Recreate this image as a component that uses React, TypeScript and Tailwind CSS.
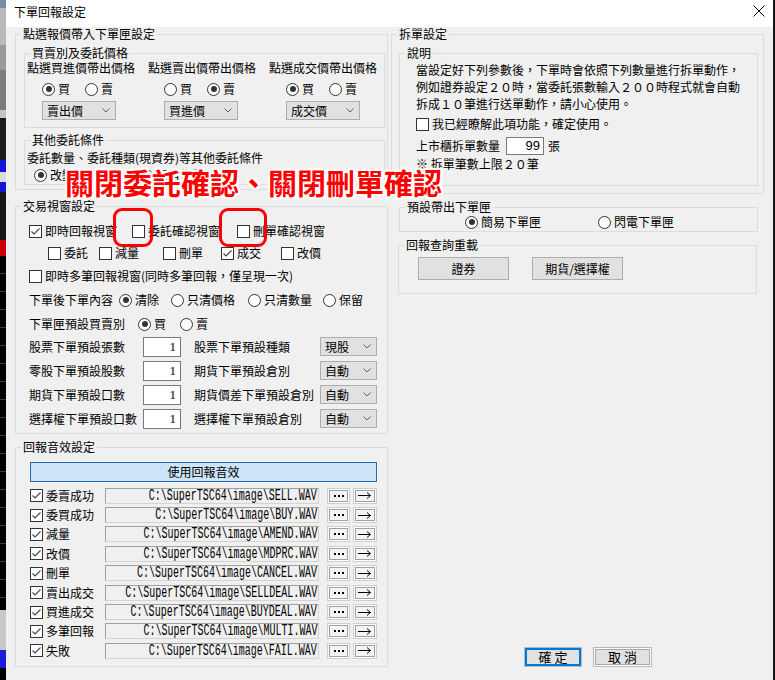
import type { ReactNode } from "react";

type BoxProps = { title: string; className?: string; children: ReactNode };

// Windows-style group box: border broken by the caption
function GroupBox({ title, className = "", children }: BoxProps) {
  return (
    <fieldset className={`min-w-0 border border-[#dcdcdc] ${className}`}>
      <legend className="ml-[5px] px-[2px] leading-[14px]">{title}</legend>
      {children}
    </fieldset>
  );
}

function Check({ checked = false }: { checked?: boolean }) {
  return (
    <span className="flex h-[13px] w-[13px] shrink-0 items-center justify-center border border-[#333] bg-white">
      {checked && (
        <svg width="11" height="11" viewBox="0 0 11 11">
          <polyline points="1.5,5.5 4,8 9.5,2.5" fill="none" stroke="#444" strokeWidth="1.1" />
        </svg>
      )}
    </span>
  );
}

function CheckItem({ checked, label, className = "" }: { checked?: boolean; label: string; className?: string }) {
  return (
    <span className={`flex shrink-0 items-center gap-[3px] whitespace-nowrap ${className}`}>
      <Check checked={checked} />
      <span>{label}</span>
    </span>
  );
}

function Radio({ checked = false }: { checked?: boolean }) {
  return (
    <span className="flex h-[13px] w-[13px] shrink-0 items-center justify-center rounded-full border border-[#333] bg-white">
      {checked && <span className="h-[6px] w-[6px] rounded-full bg-[#333]" />}
    </span>
  );
}

function RadioItem({ checked, label, className = "" }: { checked?: boolean; label: string; className?: string }) {
  return (
    <span className={`flex shrink-0 items-center gap-[3px] whitespace-nowrap ${className}`}>
      <Radio checked={checked} />
      <span>{label}</span>
    </span>
  );
}

function Combo({ value, className = "" }: { value: string; className?: string }) {
  return (
    <div className={`flex h-[19px] items-center justify-between border border-[#adadad] bg-[#e1e1e1] pl-[4px] pr-[5px] ${className}`}>
      <span>{value}</span>
      <svg width="8" height="5" viewBox="0 0 8 5">
        <polyline points="0.5,0.5 4,4 7.5,0.5" fill="none" stroke="#606060" />
      </svg>
    </div>
  );
}

function NumBox({ value, className = "" }: { value: string; className?: string }) {
  return (
    <div className={`flex items-center justify-end border border-[#7a7a7a] bg-white pr-[4px] font-['Liberation_Serif',serif] text-[13px] ${className}`}>
      {value}
    </div>
  );
}

function SmallButton({ children }: { children: ReactNode }) {
  return (
    <span className="flex h-[16px] border border-[#cfcfcf] bg-white p-[1px]">
      <span className="flex flex-1 items-center justify-center border border-[#a0a0a0] bg-[#f4f4f4]">{children}</span>
    </span>
  );
}

function BackdropLeft() {
  return (
    <div className="flex w-[6px] shrink-0 flex-col">
      <div className="h-[8px] bg-[#7d8aa6]" />
      <div className="h-[37px] bg-[#b9b9b9]" />
      <div className="h-[25px] bg-[#9a9a9a]" />
      <div className="h-[40px] bg-[#7c7c7c]" />
      <div className="h-[8px] bg-[#c4c4c4]" />
      <div className="h-[42px] bg-[#1c1c1c]" />
      <div className="h-[12px] bg-[#1414d6]" />
      <div className="h-[10px] bg-[#dcdcdc]" />
      <div className="h-[10px] bg-[#1414d6]" />
      <div className="h-[48px] bg-[#161616]" />
      <div className="h-[16px] bg-[#c80000]" />
      <div className="h-[354px] bg-[repeating-linear-gradient(to_bottom,#000_0,#000_17px,#3c3c3c_17px,#3c3c3c_18px)]" />
      <div className="h-[40px] bg-[#c8c8c8]" />
      <div className="h-[18px] bg-[#1c1cd8]" />
      <div className="flex-1 bg-black" />
    </div>
  );
}

const priceCols = [
  { label: "點選買進價帶出價格", buy: true, value: "賣出價", inset: "ml-[15px]" },
  { label: "點選賣出價帶出價格", buy: false, value: "買進價", inset: "ml-[16px]" },
  { label: "點選成交價帶出價格", buy: true, value: "成交價", inset: "ml-[17px]" },
];

const defaults = [
  { left: "股票下單預設張數", right: "股票下單預設種類", combo: "現股" },
  { left: "零股下單預設股數", right: "期貨下單預設倉別", combo: "自動" },
  { left: "期貨下單預設口數", right: "期貨價差下單預設倉別", combo: "自動" },
  { left: "選擇權下單預設口數", right: "選擇權下單預設倉別", combo: "自動" },
];

const sounds = [
  { label: "委賣成功", file: "SELL" },
  { label: "委買成功", file: "BUY" },
  { label: "減量", file: "AMEND" },
  { label: "改價", file: "MDPRC" },
  { label: "刪單", file: "CANCEL" },
  { label: "賣出成交", file: "SELLDEAL" },
  { label: "買進成交", file: "BUYDEAL" },
  { label: "多筆回報", file: "MULTI" },
  { label: "失敗", file: "FAIL" },
];

function LeftColumn() {
  return (
    <div className="flex w-[373px] shrink-0 flex-col">
      <GroupBox title="點選報價帶入下單匣設定" className="pb-[4px]">
        <GroupBox title="買賣別及委託價格" className="ml-[8px] mr-[2px] mt-[5px] pb-[7px]">
          <div className="grid grid-cols-[121px_121px_1fr] pl-[2px] pt-[1px]">
            {priceCols.map((c) => (
              <div key={c.label}>
                <div className="whitespace-nowrap">{c.label}</div>
                <div className={`mt-[6px] flex h-[16px] items-center ${c.inset}`}>
                  <RadioItem checked={c.buy} label="買" className="w-[43px]" />
                  <RadioItem checked={!c.buy} label="賣" />
                </div>
                <Combo value={c.value} className={`mt-[4px] w-[74px] ${c.inset}`} />
              </div>
            ))}
          </div>
        </GroupBox>
        <GroupBox title="其他委託條件" className="ml-[8px] mr-[2px] mt-[5px] pb-[1px]">
          <div className="pl-[2px] pt-[4px]">
            <div>委託數量、委託種類(現資券)等其他委託條件</div>
            <div className="mt-[2px] flex h-[16px] items-center pl-[7px]">
              <RadioItem checked label="改變並不設定" className="w-[106px]" />
              <RadioItem label="保留作業" />
            </div>
          </div>
        </GroupBox>
      </GroupBox>

      <GroupBox title="交易視窗設定" className="mt-[9px] pb-[4px]">
        <div className="pl-[13px] pt-[10px]">
          <div className="flex h-[16px] items-center">
            <CheckItem checked label="即時回報視窗" className="w-[103px]" />
            <CheckItem label="委託確認視窗" className="w-[105px]" />
            <CheckItem label="刪單確認視窗" />
          </div>
          <div className="mt-[6px] flex h-[16px] items-center pl-[19px]">
            <CheckItem label="委託" className="w-[51px]" />
            <CheckItem label="減量" className="w-[64px]" />
            <CheckItem label="刪單" className="w-[58px]" />
            <CheckItem checked label="成交" className="w-[60px]" />
            <CheckItem label="改價" />
          </div>
          <div className="mt-[7px] flex h-[16px] items-center">
            <CheckItem label="即時多筆回報視窗(同時多筆回報，僅呈現一次)" />
          </div>
          <div className="mt-[8px] flex h-[16px] items-center">
            <span className="w-[90px] shrink-0">下單後下單內容</span>
            <RadioItem checked label="清除" className="w-[52px]" />
            <RadioItem label="只清價格" className="w-[77px]" />
            <RadioItem label="只清數量" className="w-[75px]" />
            <RadioItem label="保留" />
          </div>
          <div className="mt-[8px] flex h-[16px] items-center">
            <span className="w-[109px] shrink-0">下單匣預設買賣別</span>
            <RadioItem checked label="買" className="w-[42px]" />
            <RadioItem label="賣" />
          </div>
          <div className="mt-[4px] flex flex-col gap-[3px]">
            {defaults.map((d) => (
              <div key={d.left} className="flex h-[21px] items-center">
                <span className="w-[114px] shrink-0 whitespace-nowrap">{d.left}</span>
                <NumBox value="1" className="h-[20px] w-[38px]" />
                <span className="ml-[13px] w-[126px] shrink-0 whitespace-nowrap">{d.right}</span>
                <Combo value={d.combo} className="w-[57px]" />
              </div>
            ))}
          </div>
        </div>
      </GroupBox>

      <GroupBox title="回報音效設定" className="mt-[6px] pb-[5px]">
        <div className="pl-[14px] pr-[10px] pt-[8px]">
          <div className="flex h-[20px] items-center justify-center border border-[#2a6cb4] bg-[#cce4f7]">使用回報音效</div>
          <div className="mt-[4px] flex flex-col">
            {sounds.map((s) => (
              <div key={s.file} className="flex h-[19.4px] items-center">
                <CheckItem checked label={s.label} className="w-[75px]" />
                <div className="flex h-[16px] w-[214px] items-center justify-end overflow-hidden border border-[#d4d4d4] border-l-[#a0a0a0] border-t-[#a0a0a0] pr-[1px]">
                  <span className="inline-block origin-right scale-x-[0.625] whitespace-nowrap font-['Liberation_Mono',monospace] text-[16px] leading-[14px]">
                    {`C:\\SuperTSC64\\image\\${s.file}.WAV`}
                  </span>
                </div>
                <div className="ml-[8px] w-[23px]">
                  <SmallButton>
                    <span className="flex gap-[2px]">
                      <span className="h-[2px] w-[2px] bg-black" />
                      <span className="h-[2px] w-[2px] bg-black" />
                      <span className="h-[2px] w-[2px] bg-black" />
                    </span>
                  </SmallButton>
                </div>
                <div className="ml-[3px] w-[24px]">
                  <SmallButton>
                    <svg width="14" height="7" viewBox="0 0 14 7">
                      <path d="M0 3.5 H12.5 M9 0.5 L12.5 3.5 L9 6.5" fill="none" stroke="#000" strokeWidth="1" />
                    </svg>
                  </SmallButton>
                </div>
              </div>
            ))}
          </div>
        </div>
      </GroupBox>
    </div>
  );
}

function RightColumn() {
  return (
    <div className="flex w-[373px] shrink-0 flex-col pb-[13px]">
      <GroupBox title="拆單設定" className="pb-[7px]">
        <GroupBox title="說明" className="ml-[7px] mr-[5px] mt-[5px] pb-[13px]">
          <div className="whitespace-nowrap pl-[16px] pt-[1px]">
            <p className="leading-[17px]">當設定好下列參數後，下單時會依照下列數量進行拆單動作，</p>
            <p className="leading-[17px]">例如證券設定２０時，當委託張數輸入２００時程式就會自動</p>
            <p className="leading-[17px]">拆成１０筆進行送單動作，請小心使用。</p>
            <div className="mt-[4px] flex h-[16px] items-center">
              <CheckItem label="我已經瞭解此項功能，確定使用。" />
            </div>
            <div className="mt-[5px] flex h-[18px] items-center">
              <span className="w-[90px] shrink-0">上市櫃拆單數量</span>
              <div className="flex h-[18px] w-[38px] items-center justify-end border border-[#7a7a7a] bg-white pr-[3px] font-['Liberation_Sans',sans-serif] text-[13px]">
                99
              </div>
              <span className="ml-[4px]">張</span>
            </div>
            <p className="leading-[17px]">※ 拆單筆數上限２０筆</p>
          </div>
        </GroupBox>
      </GroupBox>

      <GroupBox title="預設帶出下單匣" className="ml-[8px] mr-[6px] mt-[6px] pb-[1px]">
        <div className="flex h-[16px] items-center pl-[65px] pt-0">
          <RadioItem checked label="簡易下單匣" className="w-[133px]" />
          <RadioItem label="閃電下單匣" />
        </div>
      </GroupBox>

      <GroupBox title="回報查詢重載" className="ml-[7px] mr-[7px] mt-[6px] pb-[13px]">
        <div className="flex gap-[23px] pl-[19px] pt-[5px]">
          <div className="flex h-[23px] w-[91px] items-center justify-center border border-[#adadad] bg-[#e1e1e1]">證券</div>
          <div className="flex h-[23px] w-[91px] items-center justify-center border border-[#adadad] bg-[#e1e1e1]">期貨/選擇權</div>
        </div>
      </GroupBox>

      <div className="mt-auto flex gap-[11px] pl-[133px]">
        <span className="flex h-[20px] w-[58px] border border-[#b8b8b8]">
          <span className="flex flex-1 items-center justify-center border-2 border-[#0078d7] bg-[#e1e1e1] text-[13px]">確 定</span>
        </span>
        <span className="flex h-[20px] w-[59px] border border-[#b8b8b8] bg-white p-[1px]">
          <span className="flex flex-1 items-center justify-center border border-[#a8a8a8] bg-[#e1e1e1] text-[13px]">取 消</span>
        </span>
      </div>
    </div>
  );
}

export default function App() {
  return (
    <div className="relative flex h-[680px] w-[775px] overflow-hidden bg-black font-['Noto_Sans_CJK_TC','Noto_Sans',sans-serif] text-[12px] leading-[14px] text-black">
      <BackdropLeft />
      <div className="flex w-[767px] shrink-0 flex-col bg-[#f0f0f0]">
        <div className="flex h-[27px] shrink-0 items-start justify-between bg-white pl-[8px] pr-[8px] pt-[5px]">
          <span>下單回報設定</span>
          <svg width="12" height="12" viewBox="0 0 12 12">
            <path d="M0.5 0.5 L11.5 11.5 M11.5 0.5 L0.5 11.5" stroke="#000" strokeWidth="1" />
          </svg>
        </div>
        <div className="flex flex-1 gap-[3px] pl-[9px]">
          <LeftColumn />
          <RightColumn />
        </div>
      </div>
      <div className="w-[2px] shrink-0 bg-[#141414]" />

      {/* red callout drawn over the dialog */}
      <div className="pointer-events-none absolute left-[65px] top-[168px] whitespace-nowrap text-[29px] font-bold leading-[29px] text-[#ff0000] [text-shadow:2px_0_0_#fff,-2px_0_0_#fff,0_2px_0_#fff,0_-2px_0_#fff,2px_2px_0_#fff,-2px_-2px_0_#fff,2px_-2px_0_#fff,-2px_2px_0_#fff]">
        關閉委託確認、關閉刪單確認
      </div>
      <div className="pointer-events-none absolute left-[113px] top-[208px] h-[39px] w-[40px] rounded-[9px] border-[3px] border-[#ff0000]" />
      <div className="pointer-events-none absolute left-[219px] top-[208px] h-[39px] w-[48px] rounded-[9px] border-[3px] border-[#ff0000]" />
    </div>
  );
}
